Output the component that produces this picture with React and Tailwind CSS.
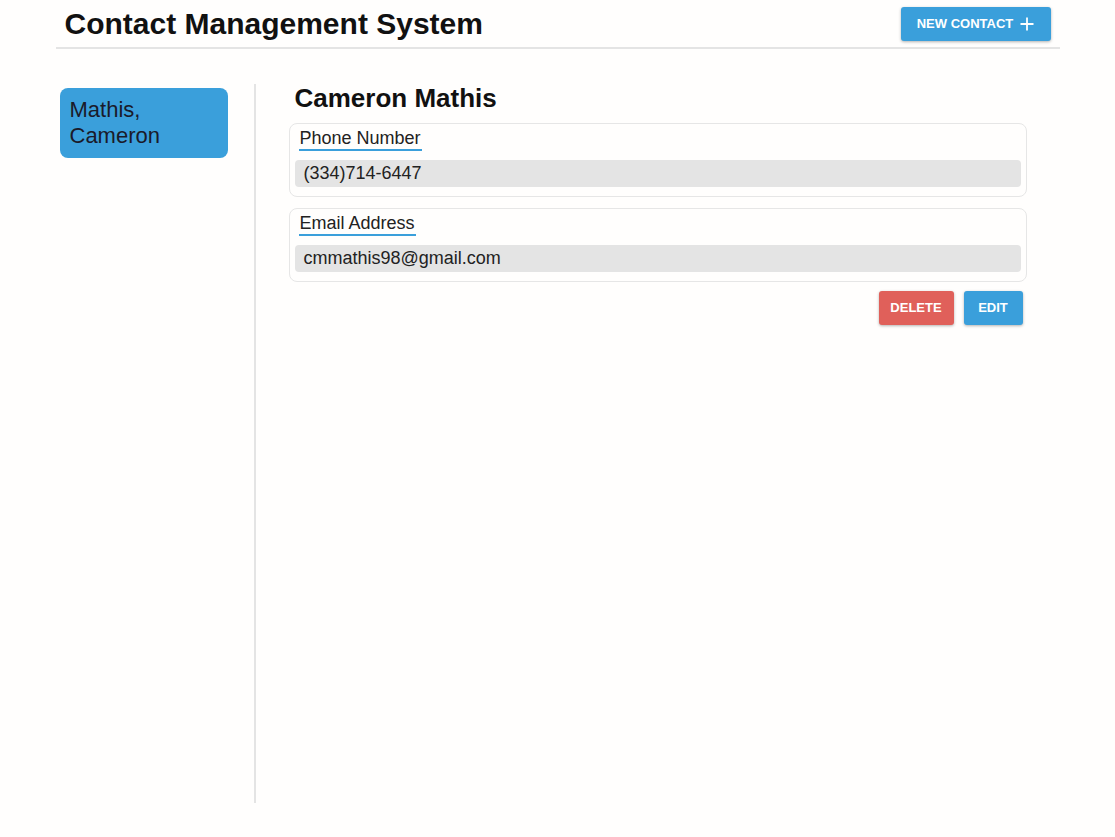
import React from "react";

function Field({ label, value }) {
  return (
    <div className="border border-[#e6e6e6] rounded-[8px] px-[5px] pt-[3px] pb-[9px] flex flex-col">
      <div className="px-[4px]">
        <span className="inline-block text-[18px] leading-[21px] text-[#222] border-b-2 border-[#3a9fdb] px-[1px]">
          {label}
        </span>
      </div>
      <div className="mt-[9px] bg-[#e4e4e4] rounded-[4px] h-[27px] flex items-center px-[9px] text-[18px] text-[#222]">
        {value}
      </div>
    </div>
  );
}

export default function App() {
  return (
    <div
      className="min-h-screen bg-[#fffefd] text-[#111]"
      style={{ fontFamily: '"Liberation Sans", Arial, sans-serif' }}
    >
      <div className="max-w-[1004px] mx-auto">
        <header className="h-[49px] border-b-2 border-[#e4e4e4] flex items-start justify-between px-[9px]">
          <h1 className="text-[30px] font-bold leading-[48px] text-[#111]">
            Contact Management System
          </h1>
          <button className="mt-[7px] h-[34px] w-[150px] bg-[#3a9fdb] text-white rounded-[3px] shadow-[0_1px_3px_rgba(0,0,0,0.3)] flex items-center justify-center gap-[7px] text-[13px] font-bold">
            NEW CONTACT
            <svg width="14" height="14" viewBox="0 0 14 14" fill="none" stroke="white" strokeWidth="1.8">
              <path d="M7 0.5v13M0.5 7h13" />
            </svg>
          </button>
        </header>

        <div className="flex mt-[35px]">
          <aside className="w-[200px] pl-[4px] border-r-2 border-[#e4e4e4] h-[719px] pt-[4px]">
            <button className="w-[168px] h-[70px] bg-[#3a9fdb] rounded-[8px] text-left px-[10px] text-[22px] leading-[26px] text-[#1a1a2a]">
              Mathis,
              <br />
              Cameron
            </button>
          </aside>

          <main className="flex-1 pl-[33px] pr-[33px]">
            <h2 className="text-[26px] font-bold leading-[28px] pl-[6px] text-[#111]">
              Cameron Mathis
            </h2>
            <div className="mt-[11px] flex flex-col gap-[11px]">
              <Field label="Phone Number" value="(334)714-6447" />
              <Field label="Email Address" value="cmmathis98@gmail.com" />
            </div>
            <div className="flex justify-end gap-[10px] mt-[9px] pr-[4px]">
              <button className="h-[34px] w-[75px] bg-[#e0605a] text-white text-[13px] font-bold rounded-[3px] shadow-[0_1px_3px_rgba(0,0,0,0.3)]">
                DELETE
              </button>
              <button className="h-[34px] w-[59px] bg-[#3a9fdb] text-white text-[13px] font-bold rounded-[3px] shadow-[0_1px_3px_rgba(0,0,0,0.3)]">
                EDIT
              </button>
            </div>
          </main>
        </div>
      </div>
    </div>
  );
}
